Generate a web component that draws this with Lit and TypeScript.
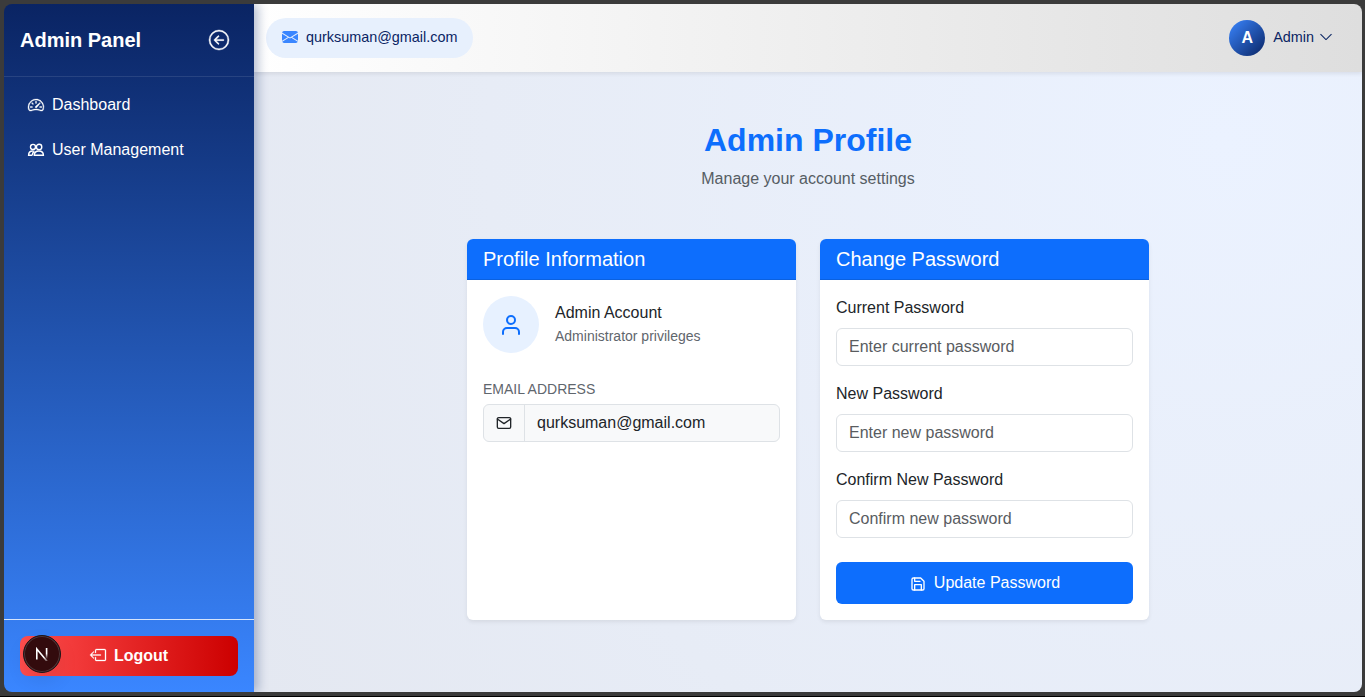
import { LitElement, html, css, svg } from "lit";
import { customElement, property } from "lit/decorators.js";

const bi = (size: number, body: unknown, weight = 0) =>
  html`<svg width=${size} height=${size} viewBox="0 0 16 16" fill="currentColor" stroke="currentColor" stroke-width=${weight} overflow="visible">${body}</svg>`;
const line = (size: number, body: unknown) =>
  html`<svg width=${size} height=${size} viewBox="0 0 24 24" fill="none" stroke="currentColor" stroke-width="2" stroke-linecap="round" stroke-linejoin="round">${body}</svg>`;

const icons = {
  collapse: bi(20, svg`<path fill-rule="evenodd" d="M1 8a7 7 0 1 0 14 0A7 7 0 0 0 1 8m15 0A8 8 0 1 1 0 8a8 8 0 0 1 16 0m-4.500-.5a.5.5 0 0 1 0 1H5.707l2.147 2.146a.5.5 0 0 1-.708.708l-3-3a.5.5 0 0 1 0-.708l3-3a.5.5 0 1 1 .708.708L5.707 7.500z"/>`, 0.35),
  dashboard: bi(16, svg`<path d="M8 4a.5.5 0 0 1 .5.5V6a.5.5 0 0 1-1 0V4.500A.5.5 0 0 1 8 4M3.732 5.732a.5.5 0 0 1 .707 0l.915.914a.5.5 0 1 1-.708.708l-.914-.915a.5.5 0 0 1 0-.707M2 10a.5.5 0 0 1 .5-.5h1.586a.5.5 0 0 1 0 1H2.500A.5.5 0 0 1 2 10m9.500 0a.5.5 0 0 1 .5-.5h1.500a.5.5 0 0 1 0 1H12a.5.5 0 0 1-.5-.5m.754-4.246a.39.39 0 0 0-.527-.02L7.547 9.310a.91.91 0 1 0 1.302 1.258l3.434-4.297a.39.39 0 0 0-.029-.518z"/><path fill-rule="evenodd" d="M0 10a8 8 0 1 1 15.547 2.661c-.442 1.253-1.845 1.602-2.932 1.250C11.309 13.488 9.475 13 8 13c-1.474 0-3.310.488-4.615.911-1.087.352-2.490.003-2.932-1.250A8 8 0 0 1 0 10m8-7a7 7 0 0 0-6.603 9.329c.203.575.923.876 1.680.630C4.397 12.533 6.358 12 8 12s3.604.532 4.923.960c.757.245 1.477-.056 1.680-.631A7 7 0 0 0 8 3"/>`, 0.35),
  users: bi(16, svg`<g fill="none" stroke="currentColor" stroke-width="1.400"><circle cx="5" cy="4.900" r="2.500"/><circle cx="11.100" cy="4.900" r="2.700"/><path d="M6.300 13.300c0-3 1.800-4.300 4.600-4.300s4.500 1.300 4.500 4.300zM4.300 13.300H.6c0-2.900 1.500-4.300 4.100-4.300.7 0 1.300.1 1.800.3M4.300 13.300c0-1.700.7-3 1.700-3.800"/></g>`),
  envelope: bi(16, svg`<path d="M.050 3.555A2 2 0 0 1 2 2h12a2 2 0 0 1 1.950 1.555L8 8.414zM0 4.697v7.104l5.803-3.558zM6.761 8.830l-6.570 4.027A2 2 0 0 0 2 14h12a2 2 0 0 0 1.808-1.144l-6.570-4.027L8 9.586zm3.436-.586L16 11.801V4.697z"/>`),
  chevron: bi(14, svg`<path fill-rule="evenodd" d="M1.646 4.646a.5.5 0 0 1 .708 0L8 10.293l5.646-5.647a.5.5 0 0 1 .708.708l-6 6a.5.5 0 0 1-.708 0l-6-6a.5.5 0 0 1 0-.708"/>`, 0.15),
  logout: bi(16, svg`<path fill-rule="evenodd" d="M6 12.500a.5.5 0 0 0 .5.5h8a.5.5 0 0 0 .5-.5v-9a.5.5 0 0 0-.5-.5h-8a.5.5 0 0 0-.5.5v2a.5.5 0 0 1-1 0v-2A1.500 1.500 0 0 1 6.500 2h8A1.500 1.500 0 0 1 16 3.500v9a1.500 1.500 0 0 1-1.500 1.500h-8A1.500 1.500 0 0 1 5 12.500v-2a.5.5 0 0 1 1 0z"/><path fill-rule="evenodd" d="M.146 8.354a.5.5 0 0 1 0-.708l3-3a.5.5 0 1 1 .708.708L1.707 7.500H10.500a.5.5 0 0 1 0 1H1.707l2.147 2.146a.5.5 0 0 1-.708.708z"/>`, 0.3),
  user: line(24, svg`<path d="M20 21v-2a4 4 0 0 0-4-4H8a4 4 0 0 0-4 4v2"/><circle cx="12" cy="7" r="4"/>`),
  mail: line(16, svg`<path d="M4 4h16c1.100 0 2 .9 2 2v12c0 1.100-.9 2-2 2H4c-1.100 0-2-.9-2-2V6c0-1.100.9-2 2-2z"/><path d="M22 6l-10 7L2 6"/>`),
  save: line(16, svg`<path d="M19 21H5a2 2 0 0 1-2-2V5a2 2 0 0 1 2-2h11l5 5v11a2 2 0 0 1-2 2z"/><path d="M17 21v-8H7v8M7 3v5h8"/>`),
};

const base = css`
  *, *::before, *::after { box-sizing: border-box; }
  svg { display: block; flex: none; }
  h1, h2, p { margin: 0; font-weight: 400; }
  button, input { font: inherit; }
`;

@customElement("admin-sidebar")
class AdminSidebar extends LitElement {
  static styles = [base, css`
    :host {
      display: flex; flex-direction: column; width: 250px; flex: none; color: #fff;
      background: linear-gradient(180deg, #0a2463 0%, #3a86ff 100%);
      box-shadow: 4px 0 10px rgba(10, 36, 99, 0.3); z-index: 2; position: relative;
    }
    .brand { display: flex; align-items: center; justify-content: space-between; height: 73px; padding: 0 25px 0 16px; border-bottom: 1px solid rgba(255, 255, 255, 0.1); }
    .title { font-size: 20px; font-weight: 700; line-height: 24px; }
    .nav { flex: 1; display: flex; flex-direction: column; gap: 5px; padding: 8px; }
    .item { display: flex; align-items: center; gap: 8px; height: 40px; padding: 0 16px; line-height: 24px; }
    .item svg { margin-bottom: 1px; }
    .foot { padding: 16px; border-top: 1px solid rgba(255, 255, 255, 0.8); position: relative; }
    .logout {
      display: flex; align-items: center; justify-content: center; gap: 8px; width: 100%; height: 40px; border: 0; border-radius: 8px;
      color: #fff; font-weight: 700; background: linear-gradient(90deg, #ff4d4d, #cc0000);
    }
    .logout svg { margin-bottom: 2px; }
    .badge {
      position: absolute; left: 19px; top: 15px; width: 38px; height: 38px; border-radius: 50%;
      display: grid; place-items: center; background: #330b0d; border: 1px solid #1d1517;
      box-shadow: inset 0 0 0 1px #51383a, 0 8px 20px rgba(0, 0, 0, 0.08);
    }
  `];
  render() {
    return html`
      <div class="brand"><h1 class="title">Admin Panel</h1>${icons.collapse}</div>
      <nav class="nav">
        <div class="item">${icons.dashboard}<span>Dashboard</span></div>
        <div class="item">${icons.users}<span>User Management</span></div>
      </nav>
      <div class="foot">
        <button class="logout">${icons.logout}<span>Logout</span></button>
        <div class="badge">
          <svg width="14" height="14" viewBox="0 0 14 14" fill="none" stroke-width="1.600">
            <defs>
              <linearGradient id="stem" x1="0" y1="0" x2="0" y2="1"><stop offset=".5" stop-color="#fff"/><stop offset="1" stop-color="#fff" stop-opacity="0"/></linearGradient>
              <linearGradient id="diag" x1="0" y1="0" x2="1" y2="1"><stop offset=".65" stop-color="#fff"/><stop offset="1" stop-color="#fff" stop-opacity=".25"/></linearGradient>
            </defs>
            <path d="M1.800 12.500V2L12.300 14.500" stroke="url(#diag)"/>
            <path d="M10.800 1h1.600v11h-1.600z" fill="url(#stem)"/>
          </svg>
        </div>
      </div>`;
  }
}

@customElement("admin-topbar")
class AdminTopbar extends LitElement {
  @property() email = "";
  static styles = [base, css`
    :host {
      box-sizing: border-box; display: flex; align-items: center; justify-content: space-between; height: 68px; flex: none; padding: 0 29px 0 12px;
      color: #0a2463; font-size: 14.4px; line-height: 24px;
      background: linear-gradient(90deg, #ffffff, #dedede); box-shadow: 0 2px 4px rgba(0, 0, 0, 0.08); position: relative; z-index: 1;
    }
    .pill { display: flex; align-items: center; gap: 8px; height: 40px; padding: 0 16px; border-radius: 20px; background: #e7f0fd; }
    .pill svg { color: #3a86ff; margin-bottom: 2px; }
    .text { padding-bottom: 2px; }
    .account { display: flex; align-items: center; gap: 8px; }
    .avatar {
      display: grid; place-items: center; width: 36px; height: 36px; border-radius: 50%; color: #fff;
      font-size: 16px; font-weight: 700; background: linear-gradient(135deg, #3a86ff, #0a2463);
    }
    .name { display: flex; align-items: center; gap: 5px; }
    .name svg { margin-bottom: 2px; }
  `];
  render() {
    return html`
      <div class="pill">${icons.envelope}<span class="text">${this.email}</span></div>
      <div class="account">
        <div class="avatar">A</div>
        <div class="name"><span class="text">Admin</span>${icons.chevron}</div>
      </div>`;
  }
}

@customElement("info-card")
class InfoCard extends LitElement {
  @property() heading = "";
  static styles = [base, css`
    :host { display: block; background: #fff; border-radius: 6px; overflow: hidden; box-shadow: 0 2px 4px rgba(0, 0, 0, 0.075); }
    .head { padding: 8px 16px; color: #fff; background: #0d6efd; border-bottom: 1px solid #0b61df; }
    .heading { font-size: 20px; line-height: 24px; }
    .body { padding: 16px; }
  `];
  render() {
    return html`<div class="head"><h2 class="heading">${this.heading}</h2></div><div class="body"><slot></slot></div>`;
  }
}

@customElement("app-root")
class AppRoot extends LitElement {
  email = "qurksuman@gmail.com";
  fields = [
    ["Current Password", "Enter current password"],
    ["New Password", "Enter new password"],
    ["Confirm New Password", "Confirm new password"],
  ];
  static styles = [base, css`
    :host {
      box-sizing: border-box; display: block; height: 697px; padding: 4px 3px 4px 4px; background: #3b3b3b; border-bottom: 1px solid #000;
      font-family: "Liberation Sans", Arial, sans-serif; font-size: 16px; line-height: 24px; color: #212529;
    }
    .window { display: flex; height: 688px; border-radius: 8px; overflow: hidden; }
    .page { flex: 1; display: flex; flex-direction: column; min-width: 0; }
    .main { flex: 1; padding: 49px 213px 0; background: radial-gradient(circle at 970px 70px, #ebf2ff 0%, #e7ecf6 66%, #e4e8f1 100%); }
    .intro { display: flex; flex-direction: column; align-items: center; gap: 8px; margin-bottom: 48px; }
    .title { font-size: 32px; line-height: 38px; font-weight: 700; color: #0d6efd; }
    .lead { color: #565d64; }
    .cards { display: grid; grid-template-columns: 1fr 1fr; gap: 24px; }
    .profile { display: flex; align-items: center; gap: 16px; margin-bottom: 24px; }
    .circle { display: grid; place-items: center; width: 56px; height: 57px; border-radius: 50%; background: #e7f1ff; color: #0d6efd; }
    .small { font-size: 14px; color: #5f666d; }
    .role { line-height: 22px; padding-bottom: 2px; }
    .caption { display: block; line-height: 24px; margin-bottom: 3px; }
    .group { display: flex; height: 38px; border: 1px solid #dee2e6; border-radius: 6px; background: #f8f9fa; }
    .addon { display: flex; align-items: center; justify-content: center; width: 41px; border-right: 1px solid #dee2e6; }
    .value { padding: 6px 12px; }
    .label { display: block; margin-bottom: 8px; }
    .input { display: block; width: 100%; height: 38px; padding: 6px 12px; margin-bottom: 16px; border: 1px solid #dee2e6; border-radius: 6px; background: #fff; }
    .input::placeholder { color: #595c5f; opacity: 1; }
    .submit { display: flex; align-items: center; justify-content: center; gap: 8px; width: 100%; height: 42px; margin-top: 24px; padding: 0 0 0 1px; border: 0; border-radius: 6px; color: #fff; background: #0d6efd; }
    .submit svg { margin-top: 2px; }
  `];
  render() {
    return html`
      <div class="window">
        <admin-sidebar></admin-sidebar>
        <div class="page">
          <admin-topbar .email=${this.email}></admin-topbar>
          <main class="main">
            <div class="intro"><h1 class="title">Admin Profile</h1><p class="lead">Manage your account settings</p></div>
            <div class="cards">
              <info-card heading="Profile Information">
                <div class="profile">
                  <div class="circle">${icons.user}</div>
                  <div><p>Admin Account</p><p class="small role">Administrator privileges</p></div>
                </div>
                <span class="small caption">EMAIL ADDRESS</span>
                <div class="group"><div class="addon">${icons.mail}</div><div class="value">${this.email}</div></div>
              </info-card>
              <info-card heading="Change Password">
                ${this.fields.map(([label, hint]) => html`<label class="label">${label}</label><input class="input" type="password" placeholder=${hint} />`)}
                <button class="submit">${icons.save}<span>Update Password</span></button>
              </info-card>
            </div>
          </main>
        </div>
      </div>`;
  }
}
